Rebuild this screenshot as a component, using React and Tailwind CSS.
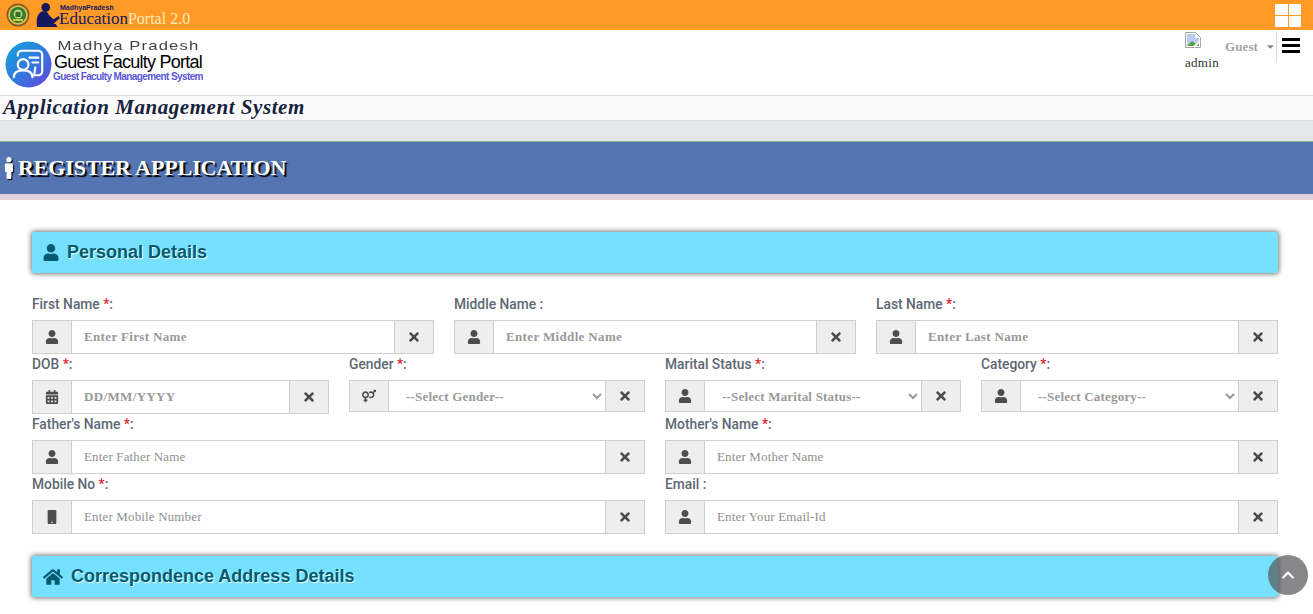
import React from "react";
import { FaUser, FaTimes, FaCalendarAlt, FaVenusMars, FaMobile, FaHome, FaChevronUp, FaMale, FaCaretDown } from "react-icons/fa";

const serif = "font-['Liberation_Serif',serif]";

const Emblem = () => (
  <svg width="24" height="24" viewBox="0 0 24 24">
    <circle cx="12" cy="12" r="11.5" fill="#8a5a24" />
    <circle cx="12" cy="12" r="9.800" fill="#d9c24a" />
    <circle cx="12" cy="12" r="8" fill="#2f7d34" />
    <circle cx="12" cy="11" r="4.500" fill="#b9d36a" />
    <path d="M9.500 9h5v5h-5z" fill="#3a6b2c" />
    <path d="M7 16h10v2H7z" fill="#d9c24a" />
  </svg>
);

const Reader = () => (
  <svg width="26" height="26" viewBox="0 0 24 24" fill="#14195e">
    <circle cx="9" cy="5" r="4" />
    <path d="M5 9c3-1 6 0 7 3l4 4 5-3 1 2-6 5H18l2 3H1c-1-6 0-12 4-14z" />
  </svg>
);

const PortalLogo = () => (
  <svg width="47" height="47" viewBox="0 0 48 48">
    <defs>
      <linearGradient id="pl" x1="0" y1="0" x2="1" y2="1">
        <stop offset="0" stopColor="#13a5dd" />
        <stop offset="0.55" stopColor="#3477dd" />
        <stop offset="1" stopColor="#6a3fe0" />
      </linearGradient>
    </defs>
    <circle cx="24" cy="24" r="23.5" fill="url(#pl)" />
    <g fill="none" stroke="#fff" strokeWidth="2.2" strokeLinecap="round" strokeLinejoin="round">
      <path d="M13 15v-1a4 4 0 0 1 4-4h17a4 4 0 0 1 4 4v17a4 4 0 0 1-4 4h-6" />
      <circle cx="18.5" cy="24" r="5.5" />
      <path d="M9 37c0-5 4-7 9.500-7s9.500 2 9.500 7" />
      <path d="M25 17h9M28 22h6M31 27l-1 6" />
    </g>
  </svg>
);

const BrokenImage = () => (
  <svg width="16" height="16" viewBox="0 0 16 16" className="block">
    <path d="M.5.5h10l5 5v10H.5z" fill="#fff" stroke="#a3a3a3" />
    <path d="M2 2h8v4h4v4l-4 4H2z" fill="#b9cdf3" />
    <path d="M2 14l5-5 4 3 3-3v5z" fill="#55a33a" />
    <path d="M9 15l6-6" stroke="#fff" strokeWidth="2" />
  </svg>
);

const Field = ({ label, required = true, icon, placeholder, select, bold, addon = "w-[40px]" }) => (
  <div>
    <label className="block h-[20px] text-[13.8px] leading-[20px] font-medium text-[#5e6874] font-['Roboto',sans-serif]">
      {label}
      {required ? (
        <>
          {" "}
          <span className="text-[#e0282e]">*</span>:
        </>
      ) : (
        " :"
      )}
    </label>
    <div className={`mt-[6px] flex ${select ? "h-[32px]" : "h-[34px]"}`}>
      <span className={`flex ${addon} shrink-0 items-center justify-center border border-[#cfcfcf] bg-[#eeeeee] text-[14px] text-[#4d4d4f]`}>
        {icon}
      </span>
      {select ? (
        <select
          className={`min-w-0 flex-1 border-y border-[#cfcfcf] bg-white pl-[13px] pr-[4px] text-[13px] tracking-[0.2px] text-[#999999] ${serif} font-bold outline-none`}
        >
          <option>{placeholder}</option>
        </select>
      ) : (
        <input
          placeholder={placeholder}
          className={`min-w-0 flex-1 border-y border-[#cfcfcf] bg-white pl-[12px] text-[13px] ${serif} ${
            bold ? "font-bold tracking-[0.35px] placeholder:text-[#999999]" : "tracking-[0.15px] placeholder:text-[#8f8f8f]"
          } outline-none`}
        />
      )}
      <span className="flex w-[40px] shrink-0 items-center justify-center border border-[#cfcfcf] bg-[#eeeeee] text-[14px] text-[#4a4a4c]">
        <FaTimes />
      </span>
    </div>
  </div>
);

const SectionTitle = ({ icon, children }) => (
  <div className="flex h-[41px] items-center gap-[8px] rounded-[3px] bg-[#76e1ff] pl-[11px] text-[18px] font-bold text-[#045b70] font-['Liberation_Sans',sans-serif] shadow-[0_0_5px_1px_rgba(0,0,0,0.55)] [text-shadow:1px_1px_1px_#fff]">
    {icon}
    {children}
  </div>
);

export default function App() {
  return (
    <div className="relative h-[614px] overflow-hidden bg-white font-['Liberation_Sans',sans-serif]">
      {/* top strip */}
      <div className="flex h-[30px] items-center justify-between bg-[#ff9a26] pl-[6px] pr-[12px]">
        <div className="flex items-center">
          <Emblem />
          <div className="ml-[6px]"><Reader /></div>
          <div className="relative ml-[-3px] flex h-[30px] items-end pb-[1px]">
            <span className={`${serif} text-[17px] leading-[20px] text-[#14195e]`}>Education</span>
            <span className={`${serif} text-[16px] leading-[20px] text-[#ffe9b8]`}>Portal 2.0</span>
            <span className="absolute left-[1px] top-[4px] whitespace-nowrap text-[7px] font-bold leading-[8px] text-[#14195e]">MadhyaPradesh</span>
          </div>
        </div>
        <div className="grid grid-cols-2 gap-[1px]">
          <span className="h-[11px] w-[12.5px] rounded-[1px] bg-white" />
          <span className="h-[11px] w-[12.5px] rounded-[1px] bg-white" />
          <span className="h-[11px] w-[12.5px] rounded-[1px] bg-white" />
          <span className="h-[11px] w-[12.5px] rounded-[1px] bg-white" />
        </div>
      </div>

      {/* brand header */}
      <div className="flex h-[66px] justify-between border-b border-[#dcdcdc]">
        <div className="flex pl-[5px] pt-[11px]">
          <PortalLogo />
          <div className="ml-[2px] flex w-[148px] flex-col items-center">
            <span className="mt-[-3px] whitespace-nowrap text-[13px] leading-[15px] tracking-[0.9px] text-[#444444] [transform:scaleX(1.28)]">Madhya Pradesh</span>
            <span className="whitespace-nowrap text-[18px] leading-[18px] tracking-[-0.75px] text-black">Guest Faculty Portal</span>
            <span className="whitespace-nowrap text-[10px] font-bold leading-[12px] tracking-[-0.6px] text-[#5a55d8]">Guest Faculty Management System</span>
          </div>
        </div>
        <div className="flex pr-[13px] pt-[2px]">
          <div className={`w-[40px] ${serif} text-[13px] leading-[15px] text-[#333333]`}>
            <BrokenImage />
            <div className="mt-[7px] tracking-[0.3px]">admin</div>
          </div>
          <div className={`flex h-[30px] w-[52px] items-center border-r border-[#d8d8d8] pb-[1px] ${serif} text-[13px] font-bold tracking-[0.1px] text-[#a3a3a3]`}>
            Guest
            <FaCaretDown className="ml-[7px] text-[11px] text-[#888888]" />
          </div>
          <div className="ml-[5px] mt-[6px] flex flex-col gap-[3px]">
            <span className="h-[3px] w-[18px] bg-black" />
            <span className="h-[3px] w-[18px] bg-black" />
            <span className="h-[3px] w-[18px] bg-black" />
          </div>
        </div>
      </div>

      {/* app title bar */}
      <div className="h-[25px] border-b border-[#dedede] bg-[#fafafa] pl-[3px]">
        <span className={`${serif} text-[21px] font-bold italic leading-[22px] tracking-[0.55px] text-[#16233f]`}>
          Application Management System
        </span>
      </div>
      <div className="h-[20px] bg-[#e6e7ea]" />

      {/* page heading */}
      <div className="flex h-[53px] items-center border-t border-[#86b58a] bg-[#5474b2] pl-[3px] text-white">
        <FaMale className="h-[22px] w-[12px] [filter:drop-shadow(1px_1px_0_#000)]" />
        <h1 className={`ml-[3px] ${serif} text-[22px] font-bold leading-none tracking-[-0.1px] [text-shadow:2px_2px_1px_#000]`}>REGISTER APPLICATION</h1>
      </div>
      <div className="h-[6px] bg-[#e0d2dc]" />

      {/* form */}
      <div className="mr-[3px] px-[32px] pt-[32px]">
        <SectionTitle icon={<FaUser className="h-[17px] w-[16px]" />}>Personal Details</SectionTitle>

        <div className="mt-[21px] grid grid-cols-3 gap-x-[20px]">
          <Field bold label="First Name" icon={<FaUser />} placeholder="Enter First Name" />
          <Field bold required={false} label="Middle Name" icon={<FaUser />} placeholder="Enter Middle Name" />
          <Field bold label="Last Name" icon={<FaUser />} placeholder="Enter Last Name" />
        </div>
        <div className="grid grid-cols-[297px_296px_296px_297px] gap-x-[20px]">
          <Field bold label="DOB" icon={<FaCalendarAlt />} placeholder="DD/MM/YYYY" />
          <Field select label="Gender" icon={<FaVenusMars />} placeholder="--Select Gender--" />
          <Field select label="Marital Status" icon={<FaUser />} placeholder="--Select Marital Status--" />
          <Field select label="Category" icon={<FaUser />} placeholder="--Select Category--" />
        </div>
        <div className="grid grid-cols-2 gap-x-[20px]">
          <Field label="Father's Name" icon={<FaUser />} placeholder="Enter Father Name" />
          <Field label="Mother's Name" icon={<FaUser />} placeholder="Enter Mother Name" />
        </div>
        <div className="grid grid-cols-2 gap-x-[20px]">
          <Field label="Mobile No" icon={<FaMobile />} placeholder="Enter Mobile Number" />
          <Field required={false} label="Email" icon={<FaUser />} placeholder="Enter Your Email-Id" />
        </div>

        <div className="mt-[22px]">
          <SectionTitle icon={<FaHome className="h-[18px] w-[20px]" />}>Correspondence Address Details</SectionTitle>
        </div>
      </div>

      {/* scroll to top */}
      <button className="absolute left-[1268px] top-[555px] flex h-[40px] w-[40px] items-center justify-center rounded-full bg-[#55555a]/70 text-[14px] text-white">
        <FaChevronUp />
      </button>
    </div>
  );
}
